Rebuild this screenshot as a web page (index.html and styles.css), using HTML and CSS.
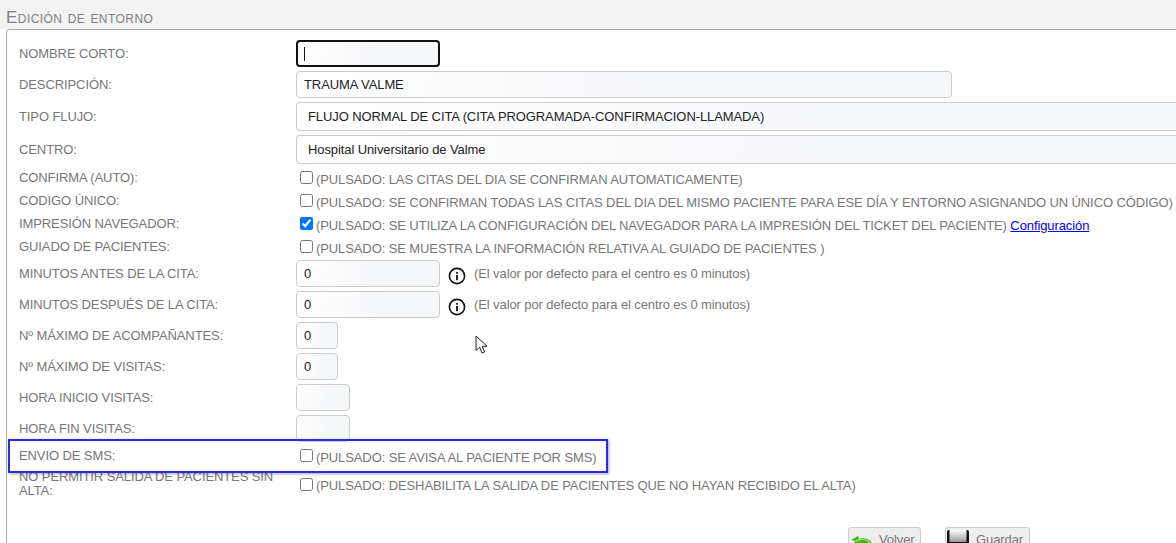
FILE: index.html
```html
<!DOCTYPE html>
<html lang="es">
<head>
<meta charset="utf-8">
<title>Edición de entorno</title>
<link rel="stylesheet" href="styles.css">
</head>
<body>
<main class="page">
  <h1 class="title">Edición de entorno</h1>
  <form class="box">
    <div class="row r31"><label class="lbl">NOMBRE CORTO:</label><div class="ctl"><div class="inp w144 focus"><span class="caret"></span></div></div></div>
    <div class="row r31"><label class="lbl">DESCRIPCIÓN:</label><div class="ctl"><div class="inp w656">TRAUMA VALME</div></div></div>
    <div class="row r33"><label class="lbl">TIPO FLUJO:</label><div class="ctl"><div class="inp sel">FLUJO NORMAL DE CITA (CITA PROGRAMADA-CONFIRMACION-LLAMADA)</div></div></div>
    <div class="row r33"><label class="lbl">CENTRO:</label><div class="ctl"><div class="inp sel">Hospital Universitario de Valme</div></div></div>
    <div class="row r23"><label class="lbl">CONFIRMA (AUTO):</label><div class="ctl chk"><input type="checkbox"><span class="hint">(PULSADO: LAS CITAS DEL DIA SE CONFIRMAN AUTOMATICAMENTE)</span></div></div>
    <div class="row r23"><label class="lbl">CODIGO ÚNICO:</label><div class="ctl chk"><input type="checkbox"><span class="hint">(PULSADO: SE CONFIRMAN TODAS LAS CITAS DEL DIA DEL MISMO PACIENTE PARA ESE DÍA Y ENTORNO ASIGNANDO UN ÚNICO CÓDIGO)</span></div></div>
    <div class="row r23"><label class="lbl">IMPRESIÓN NAVEGADOR:</label><div class="ctl chk"><input type="checkbox" checked><span class="hint">(PULSADO: SE UTILIZA LA CONFIGURACIÓN DEL NAVEGADOR PARA LA IMPRESIÓN DEL TICKET DEL PACIENTE) <a href="#">Configuración</a></span></div></div>
    <div class="row r23"><label class="lbl">GUIADO DE PACIENTES:</label><div class="ctl chk"><input type="checkbox"><span class="hint">(PULSADO: SE MUESTRA LA INFORMACIÓN RELATIVA AL GUIADO DE PACIENTES )</span></div></div>
    <div class="row r31"><label class="lbl">MINUTOS ANTES DE LA CITA:</label><div class="ctl"><div class="inp w144">0</div>
      <svg class="info" viewBox="0 0 18 18"><circle cx="9" cy="9" r="7.6" fill="none" stroke="#111" stroke-width="1.6"/><rect x="8.1" y="8" width="1.8" height="5.2" fill="#111"/><rect x="8.1" y="4.9" width="1.8" height="1.8" fill="#111"/></svg>
      <span class="note">(El valor por defecto para el centro es 0 minutos)</span></div></div>
    <div class="row r31"><label class="lbl">MINUTOS DESPUÉS DE LA CITA:</label><div class="ctl"><div class="inp w144">0</div>
      <svg class="info" viewBox="0 0 18 18"><circle cx="9" cy="9" r="7.6" fill="none" stroke="#111" stroke-width="1.6"/><rect x="8.1" y="8" width="1.8" height="5.2" fill="#111"/><rect x="8.1" y="4.9" width="1.8" height="1.8" fill="#111"/></svg>
      <span class="note">(El valor por defecto para el centro es 0 minutos)</span></div></div>
    <div class="row r31"><label class="lbl">Nº MÁXIMO DE ACOMPAÑANTES:</label><div class="ctl"><div class="inp w42">0</div></div></div>
    <div class="row r31"><label class="lbl">Nº MÁXIMO DE VISITAS:</label><div class="ctl"><div class="inp w42">0</div></div></div>
    <div class="row r31"><label class="lbl">HORA INICIO VISITAS:</label><div class="ctl"><div class="inp w54"></div></div></div>
    <div class="row r31"><label class="lbl">HORA FIN VISITAS:</label><div class="ctl"><div class="inp w54"></div></div></div>
    <div class="row r23"><label class="lbl">ENVIO DE SMS:</label><div class="ctl chk"><input type="checkbox"><span class="hint">(PULSADO: SE AVISA AL PACIENTE POR SMS)</span></div></div>
    <div class="row r34"><label class="lbl two">NO PERMITIR SALIDA DE PACIENTES SIN ALTA:</label><div class="ctl chk"><input type="checkbox"><span class="hint">(PULSADO: DESHABILITA LA SALIDA DE PACIENTES QUE NO HAYAN RECIBIDO EL ALTA)</span></div></div>
    <div class="actions">
      <div class="btn volver"><svg class="bi" viewBox="0 0 22 22"><ellipse cx="12" cy="11" rx="10" ry="9" fill="#3dbb12"/><path d="M0 4 L7 0 L9 6 Z" fill="#3dbb12"/><path d="M5 5 C10 2 16 3 19 7" stroke="#9be56f" stroke-width="1.5" fill="none"/></svg><span>Volver</span></div>
      <div class="btn guardar"><svg class="bi" viewBox="0 0 22 22"><defs><linearGradient id="fl" x1="0" y1="0" x2="0" y2="1"><stop offset="0" stop-color="#fff"/><stop offset="1" stop-color="#999"/></linearGradient></defs><rect x="0" y="0" width="22" height="22" rx="2" fill="#111"/><rect x="2.5" y="0" width="17" height="12" fill="url(#fl)"/></svg><span>Guardar</span></div>
    </div>
  </form>
  <div class="mark"></div>
  <svg class="pointer" viewBox="0 0 14 20"><path d="M1 1 L1 15.5 L4.6 12.3 L7 18 L9.6 17 L7.2 11.4 L12 11.2 Z" fill="#fff" stroke="#222" stroke-width="1"/></svg>
</main>
</body>
</html>
```
FILE: styles.css
```css
html, body { margin: 0; padding: 0; height: 543px; overflow: hidden; background: #fff; }
body { font-family: "Liberation Sans", Arial, sans-serif; font-size: 13px; letter-spacing: -0.1px; color: #777; }
.page { position: relative; height: 543px; width: 1176px; overflow: hidden; background: linear-gradient(#f3f3f3 29px, #fff 29px); }
.title { margin: 0; padding: 10px 0 0 6px; height: 19px; box-sizing: content-box; font: normal 17px/16px "Liberation Sans", Arial, sans-serif; font-variant: small-caps; letter-spacing: .45px; color: #808080; }
.box { margin: 0 0 0 6px; width: 1300px; height: 600px; box-sizing: border-box; border: 1px solid #aaa; border-radius: 3px 0 0 0; background: #fff; padding: 8px 0 0 0; }
.row { display: flex; align-items: center; }
.r31 { height: 31px; }
.r33 { height: 33px; }
.r23 { height: 23px; }
.r34 { height: 34px; }
.lbl { width: 277px; margin-left: 12px; flex: none; line-height: 14px; color: #777; }
.two { width: 265px; margin-right: 12px; }
.ctl { display: flex; align-items: center; flex: 1; min-width: 0; }
.inp { box-sizing: border-box; height: 27px; line-height: 25px; padding: 0 7px; border: 1px solid #ccc; border-radius: 4px; background: linear-gradient(100deg, #fff, #f6f7f9 60%); color: #222; }
.w144 { width: 144px; }
.w656 { width: 656px; }
.w42 { width: 42px; }
.w54 { width: 54px; }
.sel { width: 1000px; height: 29px; line-height: 27px; padding-left: 11px; border-radius: 4px 0 0 4px; border-right: 0; }
.focus { border: 2px solid #111; position: relative; }
.caret { display: inline-block; width: 1px; height: 14px; background: #111; vertical-align: -2px; margin-left: -1px; }
.chk input { width: 13px; height: 13px; margin: 0 3px 0 4px; flex: none; }
.hint { white-space: nowrap; position: relative; top: 1.5px; color: #777; }
.hint a { color: #0000ee; }
.info { width: 18px; height: 18px; margin: 4px 0 0 8px; flex: none; }
.note { margin-left: 8px; color: #777; white-space: nowrap; }
.actions { display: flex; gap: 24px; margin: 26px 0 0 841px; }
.btn { box-sizing: border-box; display: flex; align-items: flex-start; height: 40px; border: 1px solid #ccc; border-radius: 3px; background: #eee; color: #777; line-height: 14px; padding-top: 5px; }
.bi { width: 22px; height: 22px; flex: none; }
.volver { width: 73px; padding-left: 2px; }
.volver .bi { margin: 3px 6px 0 0; }
.guardar { width: 85px; padding-left: 1px; padding-top: 2px; }
.guardar .bi { margin: 0 7px 0 0; }
.guardar span { margin-top: 3px; }
.mark { position: absolute; left: 8px; top: 439px; width: 600px; height: 34px; box-sizing: border-box; border: 2px solid #2b2be6; box-shadow: 1px 1px 3px rgba(0,0,0,.35); }
.pointer { position: absolute; left: 475px; top: 335px; width: 14px; height: 20px; }
```
